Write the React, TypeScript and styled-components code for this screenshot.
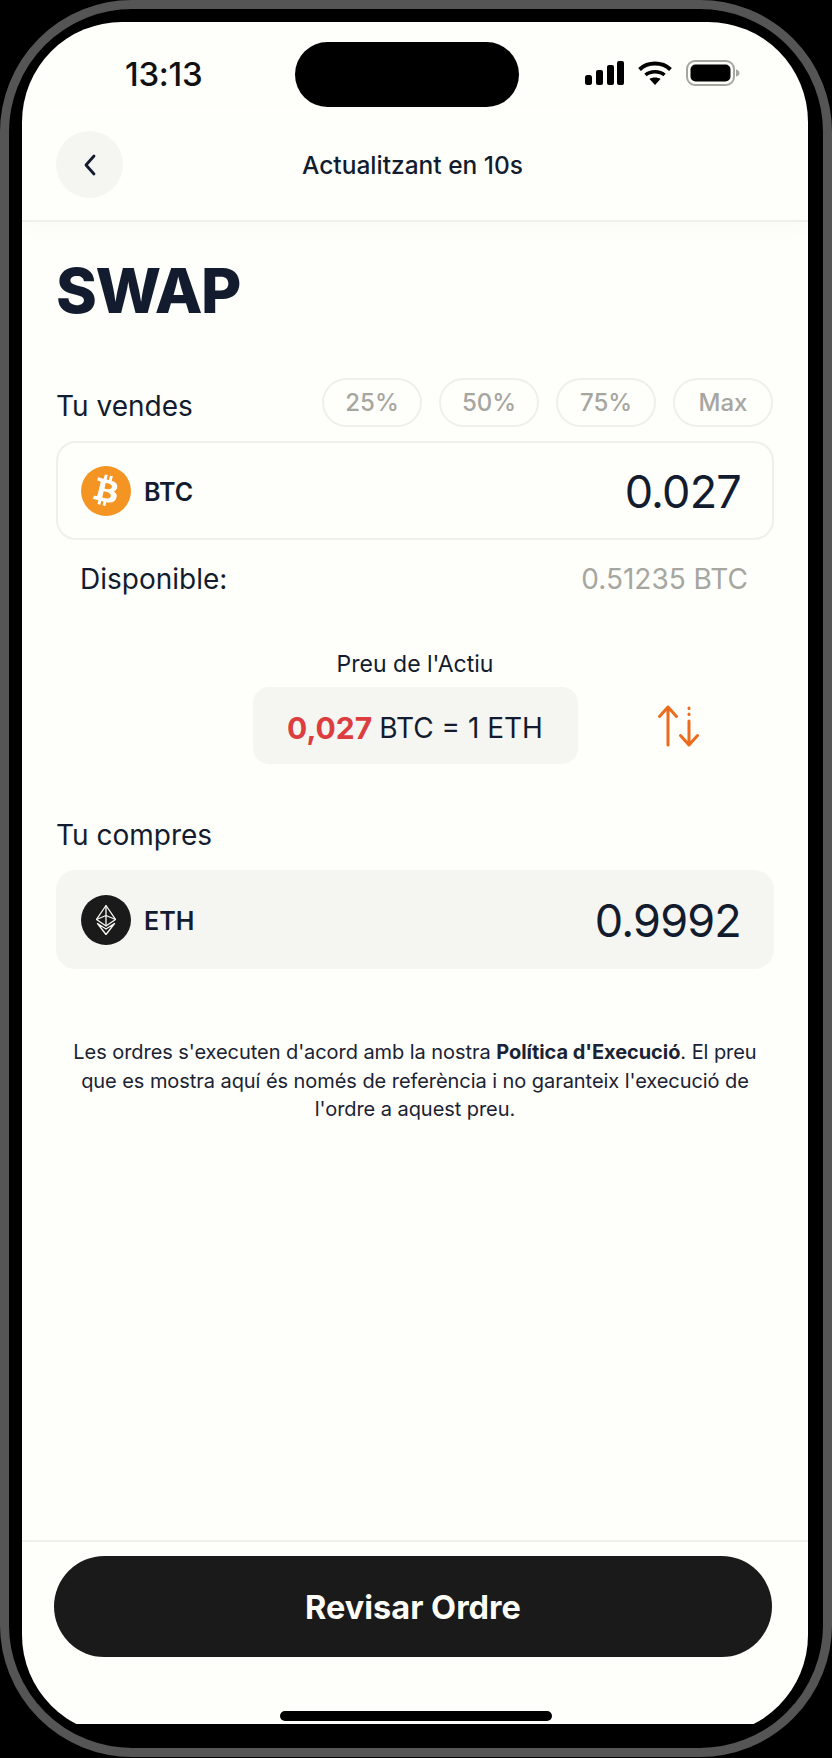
import React from 'react';
import styled, { createGlobalStyle } from 'styled-components';
import { FaBtc } from 'react-icons/fa';

const colors = {
    INK: '#121c2e',
    GRAY: '#a6a6a1',
    LINE: '#efefeb',
    SOFT: '#f5f5f1',
    PAPER: '#fefefa',
    DARK: '#1a1a1a',
    RED: '#dc3e40',
    ORANGE: '#ec6b1c',
    BTC: '#f39423',
};

const GlobalStyle = createGlobalStyle`
    html, body {
        margin: 0;
        padding: 0;
        background: #000;
    }
    body {
        font-family: Inter, "Liberation Sans", sans-serif;
        color: ${colors.INK};
    }
    * {
        box-sizing: border-box;
    }
`;

const SignalIcon = () => (
    <svg width="39" height="24" viewBox="0 0 39 24" fill="#000">
        <rect x="0" y="14" width="7" height="10" rx="2.5" />
        <rect x="11" y="9" width="7" height="15" rx="2" />
        <rect x="22" y="4" width="7" height="20" rx="2" />
        <rect x="32" y="0" width="7" height="24" rx="2" />
    </svg>
);

const WifiIcon = () => (
    <svg width="34" height="24" viewBox="0 0 34 24" fill="none" stroke="#000">
        <path d="M1.5 8.5C10 .6 24 .6 32.5 8.5" strokeWidth="4" />
        <path d="M7.5 14C12.5 9.6 21.5 9.6 26.5 14" strokeWidth="3.6" />
        <path d="M11.5 18C14 16 20 16 22.5 18L17 24Z" fill="#000" stroke="none" />
    </svg>
);

const BatteryIcon = () => (
    <svg width="54" height="26" viewBox="0 0 54 26">
        <rect x="1" y="1" width="47" height="24" rx="8" fill="none" stroke="#a6a6a1" strokeWidth="2" />
        <rect x="4.5" y="4.5" width="40" height="17" rx="5" fill="#000" />
        <path d="M50 9.5C52.5 10 53.5 11.5 53.5 13S52.5 16 50 16.5Z" fill="#a6a6a1" />
    </svg>
);

const BackIcon = () => (
    <svg width="14" height="22" viewBox="0 0 14 22" fill="none" stroke={colors.INK} strokeWidth="2.8" strokeLinecap="round" strokeLinejoin="round">
        <path d="M11 2L3 11l8 9" />
    </svg>
);

const SwapIcon = () => (
    <svg width="44" height="42" viewBox="0 0 44 42" fill="none" stroke={colors.ORANGE} strokeWidth="3" strokeLinecap="round" strokeLinejoin="round">
        <path d="M11 40V2M2.5 11.5L11 2l8.5 9.5" />
        <path d="M32 16v24M23.5 30.5L32 40l8.5-9.5" />
        <path d="M32 3v.5M32 9v.5" />
    </svg>
);

const EthIcon = () => (
    <svg width="20" height="30" viewBox="0 0 20 30" fill="none" stroke="#f8f8f4" strokeWidth="1.3" strokeLinejoin="round">
        <path d="M10 .5L19.5 14.5 10 21 .5 14.5Z" />
        <path d="M10 .5V21M.5 14.5L10 10.5l9.5 4" />
        <path d="M1.5 18.5L10 29.5l8.5-11L10 24Z" />
    </svg>
);

const chips = ['25%', '50%', '75%', 'Max'];

const App: React.FC = () => {
    return (
        <>
            <GlobalStyle />
            <Frame>
                <Clip>
                    <Screen>
                        <StatusBar>
                            <Time>13:13</Time>
                            <Island />
                            <StatusIcons>
                                <SignalIcon />
                                <WifiIcon />
                                <BatteryIcon />
                            </StatusIcons>
                        </StatusBar>
                        <Header>
                            <BackButton><BackIcon /></BackButton>
                            <HeaderTitle>Actualitzant en 10s</HeaderTitle>
                        </Header>
                        <Content>
                            <Title>SWAP</Title>
                            <SellRow>
                                <Label>Tu vendes</Label>
                                <Chips>
                                    {chips.map(chip => <Chip key={chip}>{chip}</Chip>)}
                                </Chips>
                            </SellRow>
                            <AmountBox>
                                <Coin $bg={colors.BTC}><BtcGlyph size={31} color="#fff" /></Coin>
                                <Ticker>BTC</Ticker>
                                <Amount>0.027</Amount>
                            </AmountBox>
                            <Available>
                                <span>Disponible:</span>
                                <AvailableValue>0.51235 BTC</AvailableValue>
                            </Available>
                            <PriceLabel>Preu de l'Actiu</PriceLabel>
                            <PriceRow>
                                <PriceBox>
                                    <PriceRed>0,027</PriceRed> BTC = 1 ETH
                                </PriceBox>
                                <SwapButton><SwapIcon /></SwapButton>
                            </PriceRow>
                            <BuyLabel>Tu compres</BuyLabel>
                            <AmountBox $filled>
                                <Coin $bg={colors.DARK}><EthIcon /></Coin>
                                <Ticker>ETH</Ticker>
                                <Amount>0.9992</Amount>
                            </AmountBox>
                            <Disclaimer>
                                Les ordres s'executen d'acord amb la nostra <strong>Política d'Execució</strong>. El preu
                                que es mostra aquí és només de referència i no garanteix l'execució de
                                l'ordre a aquest preu.
                            </Disclaimer>
                        </Content>
                        <Footer>
                            <ReviewButton>Revisar Ordre</ReviewButton>
                        </Footer>
                        <HomeBar />
                    </Screen>
                </Clip>
            </Frame>
        </>
    );
};

const Frame = styled.div`
    width: 832px;
    height: 1757px;
    padding: 13px 15px 24px 13px;
    border: 9px solid #555555;
    border-radius: 132px;
    background: #000;
`;

const Clip = styled.div`
    height: 100%;
    overflow: hidden;
`;

const Screen = styled.div`
    height: 1713px;
    display: flex;
    flex-direction: column;
    background: ${colors.PAPER};
    border-radius: 100px;
    overflow: hidden;
`;

const StatusBar = styled.div`
    display: flex;
    align-items: center;
    padding-top: 20px;
`;

const Time = styled.div`
    width: 273px;
    padding: 0 0 2px 103px;
    font-size: 33px;
    font-weight: 500;
    letter-spacing: -0.3px;
    color: #111;
`;

const Island = styled.div`
    width: 224px;
    height: 65px;
    border-radius: 33px;
    background: #000;
`;

const StatusIcons = styled.div`
    display: flex;
    align-items: center;
    gap: 14px;
    margin-left: 66px;
    padding-bottom: 4px;
`;

const Header = styled.div`
    position: relative;
    display: flex;
    align-items: center;
    height: 115px;
    padding: 2px 34px 0;
    border-bottom: 2px solid ${colors.LINE};
    box-shadow: 0 8px 22px rgba(0, 0, 0, 0.018);
`;

const BackButton = styled.div`
    width: 67px;
    height: 67px;
    display: flex;
    align-items: center;
    justify-content: center;
    border-radius: 50%;
    background: ${colors.SOFT};
`;

const HeaderTitle = styled.div`
    margin-left: 179px;
    font-size: 24.5px;
    font-weight: 500;
`;

const Content = styled.div`
    flex: 1;
    display: flex;
    flex-direction: column;
    padding: 0 34px;
`;

const Title = styled.h1`
    margin: 37px 0 0;
    font-size: 62px;
    line-height: 64px;
    font-weight: 800;
    letter-spacing: -1.5px;
`;

const SellRow = styled.div`
    display: flex;
    justify-content: space-between;
    align-items: flex-start;
    margin-top: 55px;
`;

const Label = styled.div`
    font-size: 28px;
    line-height: 32px;
    padding-top: 12px;
`;

const Chips = styled.div`
    display: flex;
    gap: 17px;
    margin-right: 1px;
`;

const Chip = styled.div`
    width: 100px;
    height: 49px;
    display: flex;
    align-items: center;
    justify-content: center;
    border: 2px solid ${colors.LINE};
    border-radius: 25px;
    font-size: 24px;
    font-weight: 500;
    color: ${colors.GRAY};
`;

const AmountBox = styled.div<{ $filled?: boolean }>`
    display: flex;
    align-items: center;
    height: 99px;
    margin-top: 14px;
    padding: 0 31px 0 23px;
    border: 2px solid ${props => props.$filled ? colors.SOFT : colors.LINE};
    border-radius: 20px;
    background-color: ${props => props.$filled ? colors.SOFT : 'transparent'};
`;

const Coin = styled.div<{ $bg: string }>`
    width: 50px;
    height: 50px;
    display: flex;
    align-items: center;
    justify-content: center;
    border-radius: 50%;
    background-color: ${props => props.$bg};
`;

const BtcGlyph = styled(FaBtc)`
    transform: rotate(14deg);
`;

const Ticker = styled.div`
    margin-left: 13px;
    padding-top: 2px;
    font-size: 25px;
    font-weight: 600;
`;

const Amount = styled.div`
    margin-left: auto;
    padding-top: 1px;
    font-size: 45px;
    font-weight: 400;
    letter-spacing: -0.8px;
`;

const Available = styled.div`
    display: flex;
    justify-content: space-between;
    align-items: center;
    margin-top: 22px;
    padding: 0 26px 0 24px;
    font-size: 28px;
    line-height: 34px;
`;

const AvailableValue = styled.span`
    color: ${colors.GRAY};
`;

const PriceLabel = styled.div`
    margin-top: 54px;
    text-align: center;
    font-size: 23px;
    line-height: 28px;
`;

const PriceRow = styled.div`
    display: grid;
    grid-template-columns: 1fr auto 1fr;
    align-items: center;
    margin-top: 9px;
`;

const PriceBox = styled.div`
    grid-column: 2;
    width: 325px;
    height: 77px;
    display: flex;
    align-items: center;
    justify-content: center;
    gap: 7px;
    padding-top: 4px;
    border-radius: 16px;
    background: ${colors.SOFT};
    font-size: 28px;
`;

const PriceRed = styled.span`
    color: ${colors.RED};
    font-size: 30px;
    font-weight: 700;
`;

const SwapButton = styled.div`
    margin-left: 79px;
    display: flex;
`;

const BuyLabel = styled(Label)`
    margin-top: 55px;
    padding: 0 0 5px;
`;

const Disclaimer = styled.p`
    margin: 69px 0 0;
    padding: 0 8px;
    text-align: center;
    font-size: 20px;
    line-height: 28.5px;
    letter-spacing: -0.06px;
    color: #1a2233;

    strong {
        font-weight: 700;
    }
`;

const Footer = styled.div`
    padding: 14px 36px 0 32px;
    border-top: 2px solid ${colors.LINE};
`;

const ReviewButton = styled.div`
    height: 101px;
    display: flex;
    align-items: center;
    justify-content: center;
    padding-top: 2px;
    border-radius: 51px;
    background: ${colors.DARK};
    color: #fdfdf8;
    font-size: 32.5px;
    font-weight: 700;
`;

const HomeBar = styled.div`
    width: 272px;
    height: 10px;
    margin: 54px 0 14px 258px;
    border-radius: 5px;
    background: #000;
`;

export default App;
